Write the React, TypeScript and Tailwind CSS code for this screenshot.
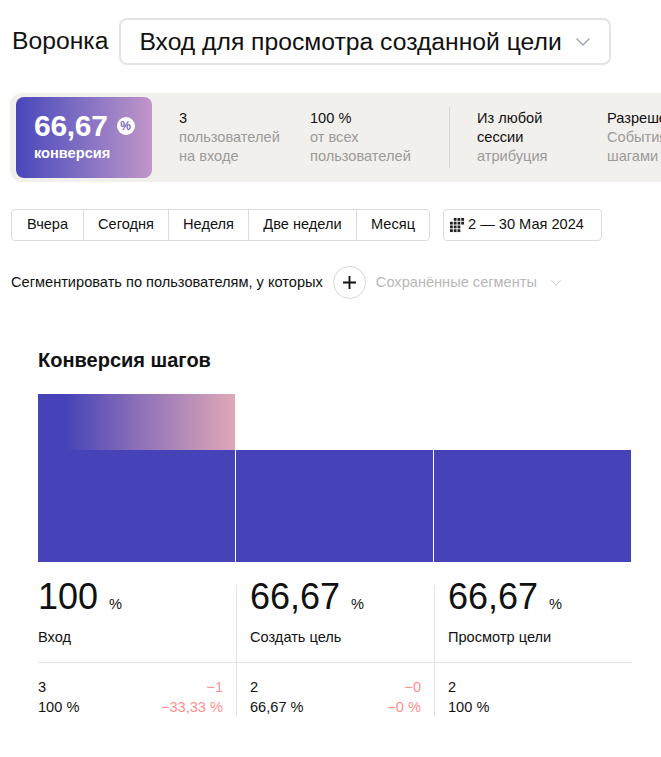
import React from 'react'

const font = { fontFamily: '"Liberation Sans", Arial, sans-serif' }

function Chevron({ className }: { className?: string }) {
  return (
    <svg viewBox="0 0 16 10" className={className} fill="none">
      <path d="M1.5 1.5 8 8l6.5-6.5" stroke="currentColor" strokeWidth="1.3" />
    </svg>
  )
}

function CalendarDots() {
  const cells = [
    [1, 0], [2, 0], [3, 0],
    [0, 1], [1, 1], [2, 1], [3, 1],
    [0, 2], [1, 2], [2, 2],
    [0, 3], [1, 3], [2, 3],
  ]
  return (
    <svg viewBox="0 0 16 16" className="w-[15px] h-[15px]">
      {cells.map(([x, y]) => (
        <rect key={`${x}-${y}`} x={x * 4} y={y * 4} width="3" height="3" fill="#222" />
      ))}
    </svg>
  )
}

const periods = [
  { label: 'Вчера', w: 'w-[71px]' },
  { label: 'Сегодня', w: 'w-[85px]' },
  { label: 'Неделя', w: 'w-[80px]' },
  { label: 'Две недели', w: 'w-[108px]' },
  { label: 'Месяц', w: 'w-[73px]' },
]

const steps = [
  { value: '100', label: 'Вход', count: '3', share: '100 %', diff: '−1', diffPct: '−33,33 %' },
  { value: '66,67', label: 'Создать цель', count: '2', share: '66,67 %', diff: '−0', diffPct: '−0 %' },
  { value: '66,67', label: 'Просмотр цели', count: '2', share: '100 %', diff: '', diffPct: '' },
]

export default function App() {
  return (
    <div className="w-[661px] h-[757px] overflow-hidden bg-white text-[#111]" style={font}>
      {/* Funnel selector */}
      <div className="flex items-center pt-[18px] pl-[12px]">
        <span className="text-[24.7px] leading-none">Воронка</span>
        <button className="ml-[11px] h-[47px] w-[492px] flex items-center justify-between rounded-lg border-2 border-[#e3e3e3] pl-[18px] pr-[18px] text-[24.7px]">
          <span>Вход для просмотра созданной цели</span>
          <Chevron className="w-[16px] h-[10px] text-[#9a9fb0]" />
        </button>
      </div>

      {/* Summary strip */}
      <div className="mt-[28px] ml-[10px] h-[89px] flex items-stretch rounded-l-xl bg-[#f2f0ec] py-[4px] pl-[6px] whitespace-nowrap overflow-hidden">
        <div className="w-[136px] shrink-0 rounded-lg bg-gradient-to-r from-[#4a46bb] to-[#c195c8] pl-[18px] pt-[14px] text-white">
          <div className="flex items-center">
            <span className="text-[30px] font-bold leading-none tracking-[-0.3px]">66,67</span>
            <span className="ml-[9px] w-[18px] h-[18px] rounded-full bg-white text-[#7d66bf] text-[12px] font-bold flex items-center justify-center">%</span>
          </div>
          <div className="text-[14.6px] font-bold mt-[2px]">конверсия</div>
        </div>
        <div className="ml-[27px] pt-[12px] text-[14.6px] leading-[19px] w-[131px] shrink-0">
          <div>3</div>
          <div className="text-[#9a9a9a]">пользователей</div>
          <div className="text-[#9a9a9a]">на входе</div>
        </div>
        <div className="pt-[12px] text-[14.6px] leading-[19px] w-[139px] shrink-0">
          <div>100 %</div>
          <div className="text-[#9a9a9a]">от всех</div>
          <div className="text-[#9a9a9a]">пользователей</div>
        </div>
        <div className="my-[10px] w-px bg-[#d9d6d2] shrink-0" />
        <div className="ml-[27px] pt-[12px] text-[14.6px] leading-[19px] w-[130px] shrink-0">
          <div>Из любой</div>
          <div>сессии</div>
          <div className="text-[#9a9a9a]">атрибуция</div>
        </div>
        <div className="pt-[12px] text-[14.6px] leading-[19px] shrink-0">
          <div>Разрешены</div>
          <div className="text-[#9a9a9a]">События между</div>
          <div className="text-[#9a9a9a]">шагами</div>
        </div>
      </div>

      {/* Periods */}
      <div className="mt-[27px] ml-[11px] flex items-center">
        <div className="flex h-[32px] rounded border border-[#dcdcdc] text-[14.6px]">
          {periods.map((p, i) => (
            <div
              key={p.label}
              className={`${p.w} flex items-center justify-center ${i > 0 ? 'border-l border-[#dcdcdc]' : ''}`}
            >
              {p.label}
            </div>
          ))}
        </div>
        <div className="ml-[13px] h-[32px] w-[159px] rounded border border-[#dcdcdc] flex items-center pl-[6px] gap-[3px] text-[14.6px]">
          <CalendarDots />
          <span>2 — 30 Мая 2024</span>
        </div>
      </div>

      {/* Segmentation */}
      <div className="mt-[25px] ml-[11px] flex items-center text-[14.6px]">
        <span>Сегментировать по пользователям, у которых</span>
        <div className="ml-[10px] w-[33px] h-[33px] rounded-full border border-[#d6d6d6] flex items-center justify-center">
          <svg viewBox="0 0 14 14" className="w-[13px] h-[13px]">
            <path d="M7 0v14M0 7h14" stroke="#111" strokeWidth="2" />
          </svg>
        </div>
        <span className="ml-[10px] text-[#b8b8b8]">Сохранённые сегменты</span>
        <Chevron className="ml-[13px] w-[12px] h-[8px] text-[#c4c4c4]" />
      </div>

      {/* Step conversion */}
      <div className="mt-[51px] ml-[38px] w-[594px]">
        <h2 className="text-[20px] font-bold leading-none">Конверсия шагов</h2>

        <div className="mt-[24px] flex items-end gap-px">
          <div className="w-[197px]">
            <div
              className="h-[56px]"
              style={{ background: 'linear-gradient(90deg, #4643b8 14%, #8b6fb8 50%, #e0a8b8 100%)' }}
            />
            <div className="h-[112px] bg-[#4643b8]" />
          </div>
          <div className="w-[197px] h-[112px] bg-[#4643b8]" />
          <div className="w-[197px] h-[112px] bg-[#4643b8]" />
        </div>

        <div className="mt-[23px] flex">
          {steps.map((s, i) => (
            <div
              key={s.label + i}
              className={`w-[198px] ${i > 0 ? 'border-l border-[#e2e2e2]' : ''}`}
            >
              <div className={`flex flex-col border-b border-[#e2e2e2] h-[78px] ${i > 0 ? 'pl-[13px]' : ''}`}>
                <div className="flex items-baseline -mt-[10px]">
                  <span className="text-[36px] leading-[44px]">{s.value}</span>
                  <span className="ml-[11px] text-[14.6px]">%</span>
                </div>
                <div className="mt-[10px] text-[14.6px] leading-[17px]">{s.label}</div>
              </div>
              <div className={`pt-[14px] flex justify-between text-[14.6px] leading-[20px] ${i > 0 ? 'pl-[13px]' : ''} pr-[13px]`}>
                <div>
                  <div>{s.count}</div>
                  <div>{s.share}</div>
                </div>
                <div className="text-right text-[#ff8f8f]">
                  <div>{s.diff}</div>
                  <div>{s.diffPct}</div>
                </div>
              </div>
            </div>
          ))}
        </div>
      </div>
    </div>
  )
}
